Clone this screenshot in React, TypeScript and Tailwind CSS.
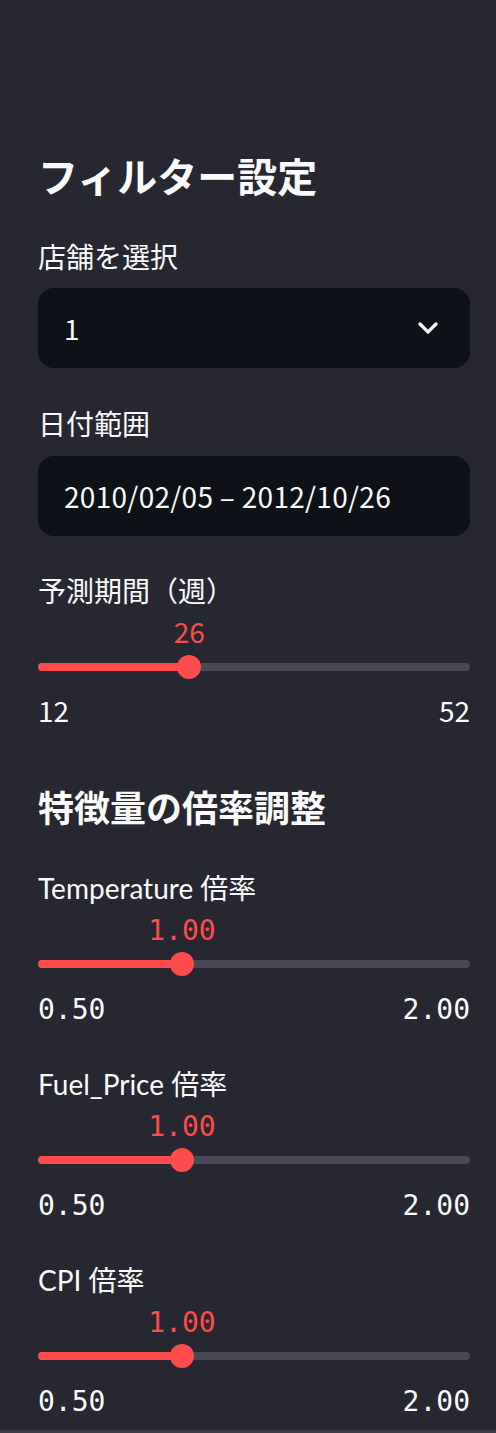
import React from "react";

const SANS = '"Noto Sans CJK JP", "Noto Sans", sans-serif';
const LABEL = 'Lato, "Noto Sans CJK JP", sans-serif';
const MONO = '"DejaVu Sans Mono", "Liberation Mono", monospace';

function Slider({
  label,
  value,
  min,
  max,
  frac,
  mono,
}: {
  label: string;
  value: string;
  min: string;
  max: string;
  frac: number;
  mono: boolean;
}) {
  const numFont = mono ? MONO : SANS;
  return (
    <div className="flex flex-col">
      <div
        className="h-[40px] text-[28px] leading-[40px] text-[#fafafa]"
        style={{ fontFamily: LABEL }}
      >
        {label}
      </div>
      <div className={mono ? "relative mt-[7px] h-[32px]" : "relative mt-[4px] h-[32px]"}>
        <div
          className="absolute top-0 -translate-x-1/2 text-[28px] leading-[32px] text-[#ff4b4b]"
          style={{ left: `${frac * 100}%`, fontFamily: numFont }}
        >
          {value}
        </div>
      </div>
      <div
        className={
          mono
            ? "relative mt-[5px] flex h-[24px] items-center"
            : "relative mt-[8px] flex h-[24px] items-center"
        }
      >
        <div className="relative h-[8px] w-full rounded-full bg-[#484953]">
          <div
            className="absolute left-0 top-0 h-[8px] rounded-full bg-[#ff4b4b]"
            style={{ width: `${frac * 100}%` }}
          />
        </div>
        <div
          className="absolute top-0 h-[24px] w-[24px] -translate-x-1/2 rounded-full bg-[#ff4b4b]"
          style={{ left: `${frac * 100}%` }}
        />
      </div>
      <div
        className={
          mono
            ? "mt-[18px] flex h-[32px] justify-between text-[28px] leading-[32px] text-[#fafafa]"
            : "mt-[15px] flex h-[32px] justify-between text-[28px] leading-[32px] text-[#fafafa]"
        }
        style={{ fontFamily: numFont }}
      >
        <span>{min}</span>
        <span>{max}</span>
      </div>
    </div>
  );
}

export default function App() {
  return (
    <div
      className="flex h-[1433px] w-[496px] flex-col overflow-hidden bg-[#262730]"
      style={{ fontFamily: SANS }}
    >
      <div className="flex flex-col px-[38px] pr-[26px]">
        <h2 className="mt-[149px] h-[52px] text-[40px] font-bold leading-[52px] text-[#fafafa]">
          フィルター設定
        </h2>

        <div className="mt-[35px] h-[40px] text-[28px] leading-[40px] text-[#fafafa]">店舗を選択</div>
        <div className="mt-[12px] flex h-[80px] items-center justify-between rounded-[16px] bg-[#0e1117] pl-[26px] pr-[32px]">
          <span className="text-[28px] text-[#fafafa]">1</span>
          <svg width="20" height="12" viewBox="0 0 20 12" fill="none">
            <polyline
              points="2,2 10,10 18,2"
              stroke="#fafafa"
              strokeWidth="3.2"
              strokeLinecap="round"
              strokeLinejoin="round"
            />
          </svg>
        </div>

        <div className="mt-[35px] h-[40px] text-[28px] leading-[40px] text-[#fafafa]">日付範囲</div>
        <div className="mt-[13px] flex h-[80px] items-center rounded-[16px] bg-[#0e1117] pl-[26px]">
          <span className="text-[28px] tracking-[0.3px] text-[#fafafa]">2010/02/05 – 2012/10/26</span>
        </div>

        <div className="mt-[35px]">
          <Slider label="予測期間（週）" value="26" min="12" max="52" frac={0.35} mono={false} />
        </div>

        <h3 className="mt-[56px] h-[48px] text-[36px] font-bold leading-[48px] text-[#fafafa]">
          特徴量の倍率調整
        </h3>

        <div className="mt-[38px] flex flex-col gap-[38px]">
          <Slider label="Temperature 倍率" value="1.00" min="0.50" max="2.00" frac={1 / 3} mono />
          <Slider label="Fuel_Price 倍率" value="1.00" min="0.50" max="2.00" frac={1 / 3} mono />
          <Slider label="CPI 倍率" value="1.00" min="0.50" max="2.00" frac={1 / 3} mono />
        </div>
      </div>
      <div className="mt-auto h-[3px] w-full bg-[#3c3d46]" />
    </div>
  );
}
